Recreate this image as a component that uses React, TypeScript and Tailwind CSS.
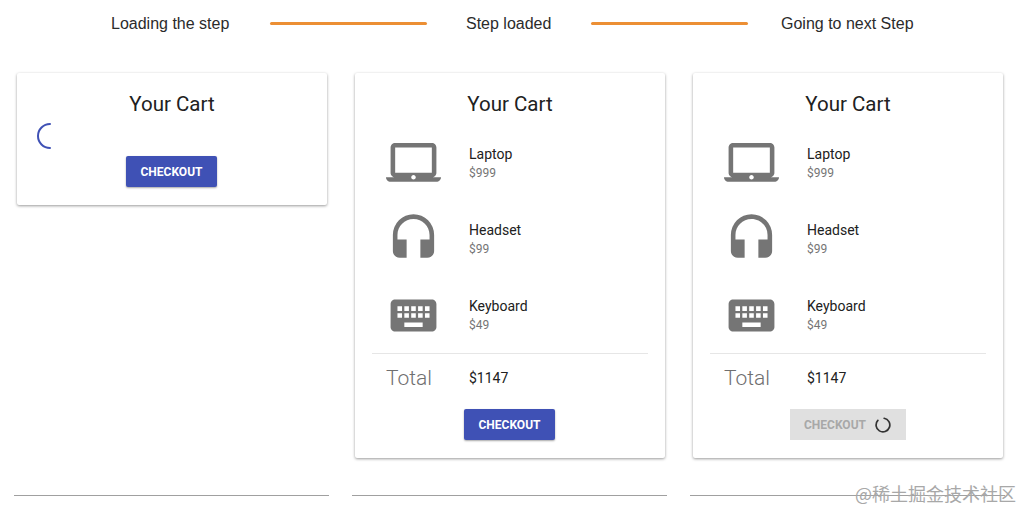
import { MdHeadset, MdKeyboard, MdLaptopMac } from "react-icons/md"

const items = [
  { name: "Laptop", price: "$999", Icon: MdLaptopMac },
  { name: "Headset", price: "$99", Icon: MdHeadset },
  { name: "Keyboard", price: "$49", Icon: MdKeyboard },
]

function Arc({ d, width, className }: { d: string; width: number; className: string }) {
  return (
    <svg viewBox="0 0 28 28" className={className} fill="none">
      <path d={d} stroke="currentColor" strokeWidth={width} strokeLinecap="round" />
    </svg>
  )
}

function CheckoutButton() {
  return (
    <button className="h-[31px] w-[91px] rounded-[2px] bg-[#3f51b5] pl-px text-[12px] font-bold text-white shadow-[0_1px_2px_rgba(0,0,0,0.35)]">
      CHECKOUT
    </button>
  )
}

function LoadingButton() {
  return (
    <button className="flex h-[31px] w-[116px] items-center gap-[9px] bg-[#e0e0e0] pl-[14px] text-[12px] font-bold text-[#a8a8a8]">
      CHECKOUT
      <Arc d="M16 2.2 A 12 12 0 1 1 5 6" width={3} className="h-[16px] w-[16px] text-[#333333]" />
    </button>
  )
}

function CartItems() {
  return (
    <>
      <div className="border-b border-[#e6e6e6]">
        {items.map(({ name, price, Icon }) => (
          <div key={name} className="flex h-[76px] items-center">
            <Icon size={55} className="ml-[14px] mr-[28px] text-[#757575]" />
            <div>
              <div className="text-[14px] leading-[20px] text-[#212121]">{name}</div>
              <div className="mt-px text-[12px] leading-[17px] text-[#757575]">{price}</div>
            </div>
          </div>
        ))}
      </div>
      <div className="flex h-[48px] items-center">
        <div className="ml-[14px] mt-[2px] w-[83px] text-[21px] font-light text-[#6f6f6f]">Total</div>
        <div className="text-[14px] text-[#212121]">$1147</div>
      </div>
    </>
  )
}

function Card({ children }: { children: React.ReactNode }) {
  return (
    <div className="w-[310px] rounded-[2px] bg-white px-[17px] pt-[18px] pb-[18px] shadow-[0_1px_3px_rgba(0,0,0,0.4)]">
      <h2 className="h-[34px] text-center text-[20.5px] leading-[26px] text-[#212121]">Your Cart</h2>
      {children}
    </div>
  )
}

export default function App() {
  return (
    <div className="relative h-[510px] w-[1021px] overflow-hidden bg-white font-['Roboto',sans-serif]">
      <div className="flex h-[47px] items-center pl-[111px] font-['Liberation_Sans',sans-serif] text-[16px] text-[#2b2b2b]">
        <span className="w-[119px]">Loading the step</span>
        <span className="ml-[40px] h-[3px] w-[157px] rounded-full bg-[#ec8f34]" />
        <span className="ml-[39px] w-[86px]">Step loaded</span>
        <span className="ml-[39px] h-[3px] w-[157px] rounded-full bg-[#ec8f34]" />
        <span className="ml-[33px]">Going to next Step</span>
      </div>

      <div className="flex items-start gap-[28px] pl-[17px] pt-[26px]">
        <Card>
          <Arc d="M14 2 A 12 12 0 0 0 14 26" width={2} className="ml-[2px] -mt-[3px] h-[28px] w-[28px] text-[#3f51b5]" />
          <div className="mt-[6px] flex justify-center pr-[2px]">
            <CheckoutButton />
          </div>
        </Card>
        <Card>
          <CartItems />
          <div className="flex justify-center pr-[2px] pt-[7px]">
            <CheckoutButton />
          </div>
        </Card>
        <Card>
          <CartItems />
          <div className="flex justify-center pt-[7px]">
            <LoadingButton />
          </div>
        </Card>
      </div>

      <div className="flex gap-[23px] pl-[14px] pt-[37px]">
        <div className="h-px w-[315px] bg-[#a0a0a0]" />
        <div className="h-px w-[315px] bg-[#a0a0a0]" />
        <div className="h-px w-[315px] bg-[#a0a0a0]" />
      </div>

      <div className="absolute left-[855px] top-[481px] font-['Noto_Sans_CJK_SC',sans-serif] text-[18px] leading-[24px] text-[#a8a8a8]">
        @稀土掘金技术社区
      </div>
    </div>
  )
}
